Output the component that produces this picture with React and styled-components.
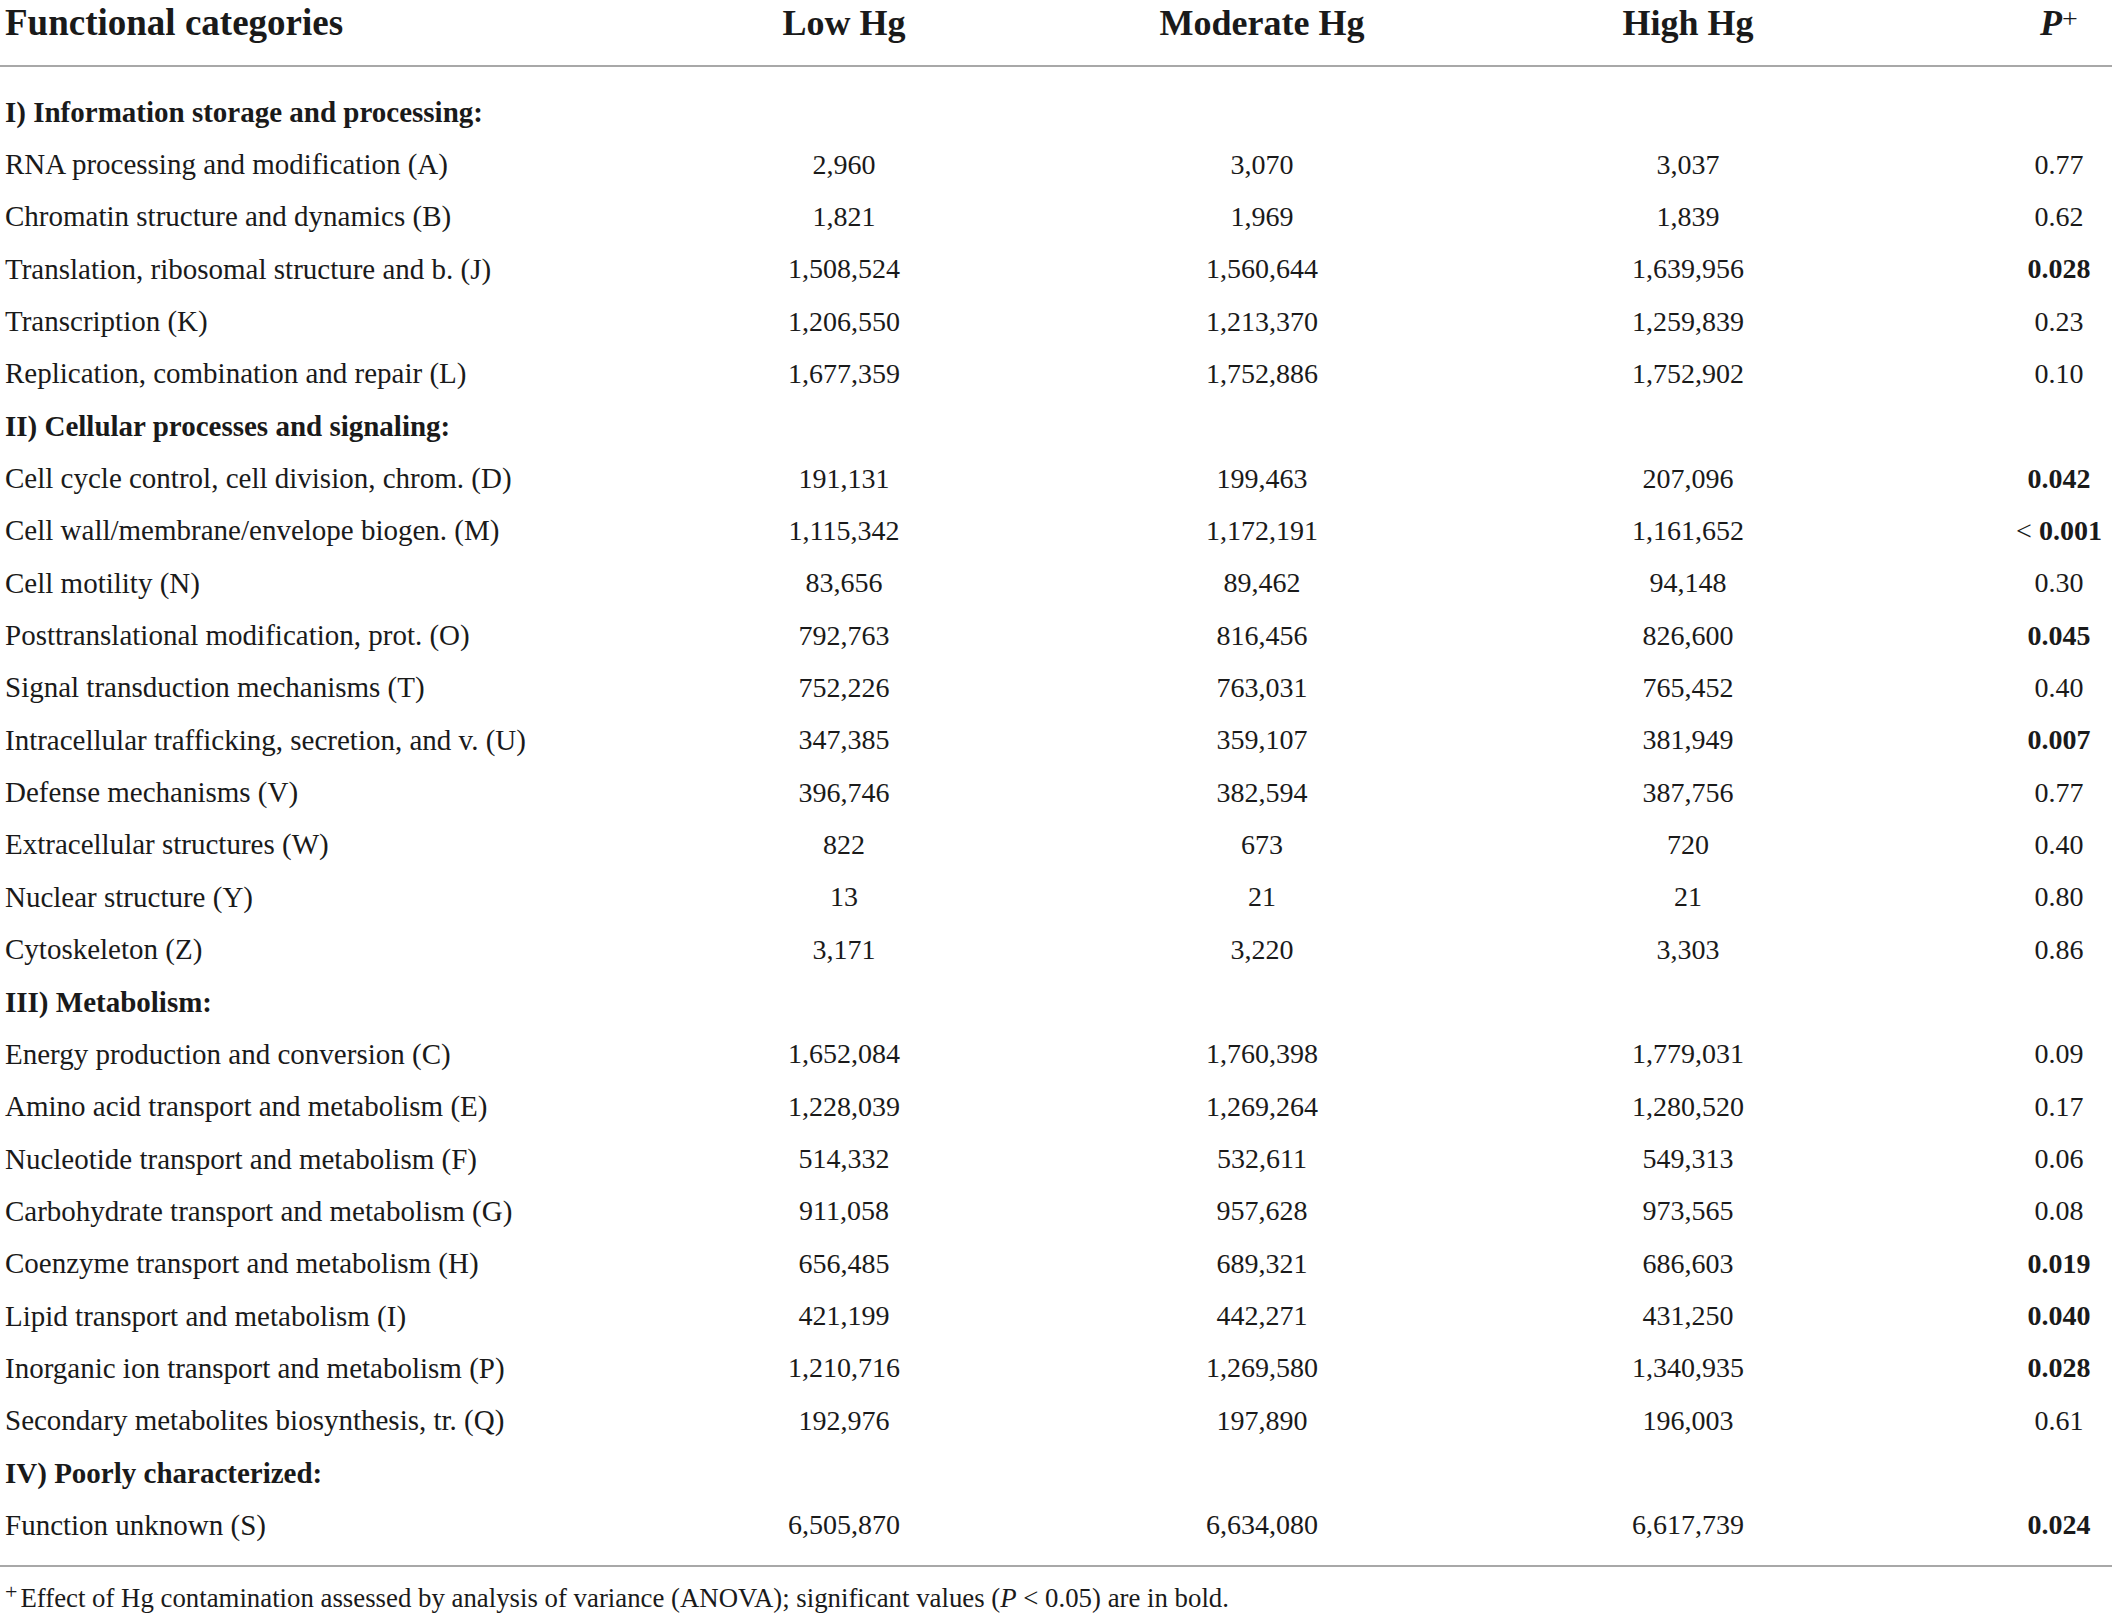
import React from "react";
import styled, { createGlobalStyle } from "styled-components";

const GlobalStyle = createGlobalStyle`
  html, body {
    margin: 0;
    padding: 0;
    background: #fff;
  }
  body {
    font-family: "Liberation Serif", "Times New Roman", serif;
    color: #1a1a1a;
  }
`;

const COLUMNS = "644px 400px 436px 416px 216px";

const Table = styled.div`
  width: 2112px;
  display: flex;
  flex-direction: column;
`;

const HeadRow = styled.div`
  display: grid;
  grid-template-columns: ${COLUMNS};
  height: 65px;
  border-bottom: 2px solid #a8a8a8;
  font-weight: bold;
  font-size: 36px;
  line-height: 46px;
`;

const HeadCell = styled.div`
  text-align: ${(props) => (props.left ? "left" : "center")};
  padding-left: ${(props) => (props.left ? "5px" : props.offset || "0")};
  font-style: ${(props) => (props.italic ? "italic" : "normal")};
  font-size: ${(props) => (props.wide ? "37px" : "36px")};
  white-space: nowrap;

  sup {
    font-size: 28px;
    font-weight: normal;
    font-style: normal;
    line-height: 0;
    vertical-align: 7px;
  }
`;

const Body = styled.div`
  padding: 19px 0 13px;
  border-bottom: 2px solid #a8a8a8;
`;

const Row = styled.div`
  display: grid;
  grid-template-columns: ${COLUMNS};
  height: 52.35px;
  align-items: center;
  font-size: 28px;
`;

const Section = styled.div`
  grid-column: 1 / -1;
  padding-left: 5px;
  font-weight: bold;
  font-size: 29px;
`;

const Label = styled.div`
  padding-left: 5px;
  font-size: 29px;
  white-space: nowrap;
`;

const Num = styled.div`
  text-align: center;
  padding-left: ${(props) => props.offset || "0"};
  white-space: nowrap;
`;

const Sig = styled.b`
  font-weight: bold;
`;

const Footnote = styled.div`
  padding: 15px 0 0 5px;
  font-size: 26.8px;
  line-height: 32px;

  sup {
    font-size: 22px;
    line-height: 0;
    vertical-align: 8px;
    margin-right: 3px;
  }
`;

const rows = [
  { section: "I) Information storage and processing:" },
  ["RNA processing and modification (A)", "2,960", "3,070", "3,037", "0.77"],
  ["Chromatin structure and dynamics (B)", "1,821", "1,969", "1,839", "0.62"],
  ["Translation, ribosomal structure and b. (J)", "1,508,524", "1,560,644", "1,639,956", "0.028", true],
  ["Transcription (K)", "1,206,550", "1,213,370", "1,259,839", "0.23"],
  ["Replication, combination and repair (L)", "1,677,359", "1,752,886", "1,752,902", "0.10"],
  { section: "II) Cellular processes and signaling:" },
  ["Cell cycle control, cell division, chrom. (D)", "191,131", "199,463", "207,096", "0.042", true],
  ["Cell wall/membrane/envelope biogen. (M)", "1,115,342", "1,172,191", "1,161,652", "0.001", true, "< "],
  ["Cell motility (N)", "83,656", "89,462", "94,148", "0.30"],
  ["Posttranslational modification, prot. (O)", "792,763", "816,456", "826,600", "0.045", true],
  ["Signal transduction mechanisms (T)", "752,226", "763,031", "765,452", "0.40"],
  ["Intracellular trafficking, secretion, and v. (U)", "347,385", "359,107", "381,949", "0.007", true],
  ["Defense mechanisms (V)", "396,746", "382,594", "387,756", "0.77"],
  ["Extracellular structures (W)", "822", "673", "720", "0.40"],
  ["Nuclear structure (Y)", "13", "21", "21", "0.80"],
  ["Cytoskeleton (Z)", "3,171", "3,220", "3,303", "0.86"],
  { section: "III) Metabolism:" },
  ["Energy production and conversion (C)", "1,652,084", "1,760,398", "1,779,031", "0.09"],
  ["Amino acid transport and metabolism (E)", "1,228,039", "1,269,264", "1,280,520", "0.17"],
  ["Nucleotide transport and metabolism (F)", "514,332", "532,611", "549,313", "0.06"],
  ["Carbohydrate transport and metabolism (G)", "911,058", "957,628", "973,565", "0.08"],
  ["Coenzyme transport and metabolism (H)", "656,485", "689,321", "686,603", "0.019", true],
  ["Lipid transport and metabolism (I)", "421,199", "442,271", "431,250", "0.040", true],
  ["Inorganic ion transport and metabolism (P)", "1,210,716", "1,269,580", "1,340,935", "0.028", true],
  ["Secondary metabolites biosynthesis, tr. (Q)", "192,976", "197,890", "196,003", "0.61"],
  { section: "IV) Poorly characterized:" },
  ["Function unknown (S)", "6,505,870", "6,634,080", "6,617,739", "0.024", true],
];

const P_OFFSET = "110px";

export default function App() {
  return (
    <>
      <GlobalStyle />
      <Table>
        <HeadRow>
          <HeadCell left wide>
            Functional categories
          </HeadCell>
          <HeadCell>Low Hg</HeadCell>
          <HeadCell>Moderate Hg</HeadCell>
          <HeadCell>High Hg</HeadCell>
          <HeadCell italic offset={P_OFFSET}>
            P<sup>+</sup>
          </HeadCell>
        </HeadRow>
        <Body>
          {rows.map((r, i) =>
            r.section ? (
              <Row key={i}>
                <Section>{r.section}</Section>
              </Row>
            ) : (
              <Row key={i}>
                <Label>{r[0]}</Label>
                <Num>{r[1]}</Num>
                <Num>{r[2]}</Num>
                <Num>{r[3]}</Num>
                <Num offset={P_OFFSET}>
                  {r[6]}
                  {r[5] ? <Sig>{r[4]}</Sig> : r[4]}
                </Num>
              </Row>
            )
          )}
        </Body>
        <Footnote>
          <sup>+</sup>Effect of Hg contamination assessed by analysis of variance
          (ANOVA); significant values (<i>P</i> &lt; 0.05) are in bold.
        </Footnote>
      </Table>
    </>
  );
}
